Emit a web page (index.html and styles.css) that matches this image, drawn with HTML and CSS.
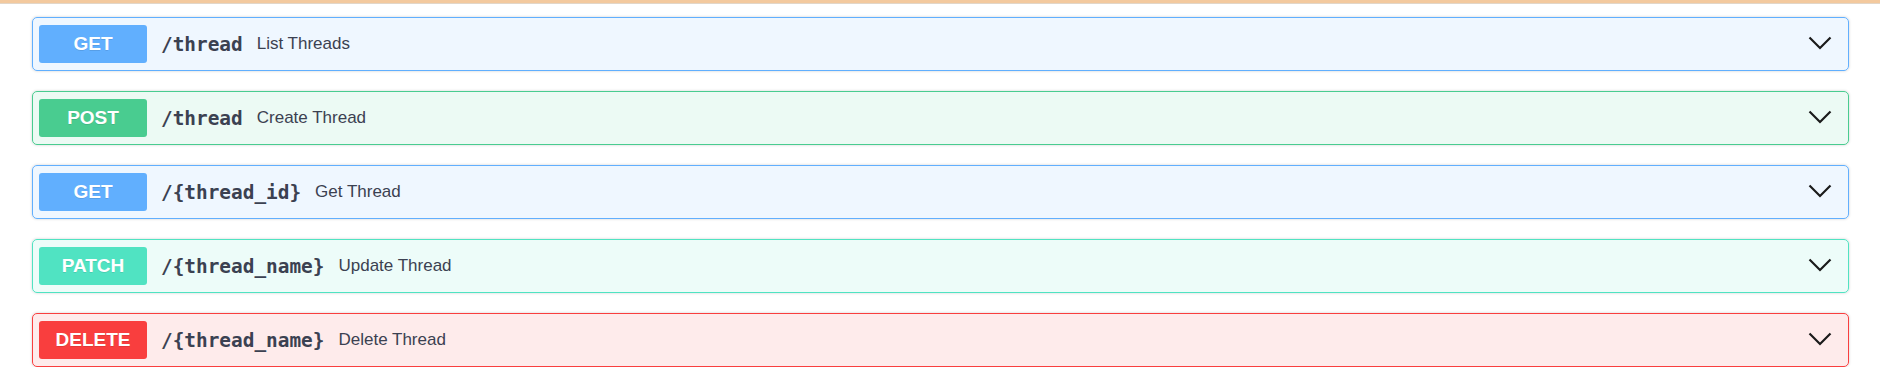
FILE: index.html
```html
<!DOCTYPE html>
<html lang="en">
<head>
    <meta charset="UTF-8">
    <title>Threads API</title>
    <link rel="stylesheet" href="styles.css">
</head>
<body>
    <div class="top-band"></div>
    <div class="operations">
        <div class="opblock opblock-get">
            <span class="method">GET</span>
            <span class="path">/thread</span>
            <span class="desc">List Threads</span>
            <svg class="arrow" width="24" height="14" viewBox="0 0 24 14"><polyline points="1.5,1.5 12,12 22.5,1.5"/></svg>
        </div>
        <div class="opblock opblock-post">
            <span class="method">POST</span>
            <span class="path">/thread</span>
            <span class="desc">Create Thread</span>
            <svg class="arrow" width="24" height="14" viewBox="0 0 24 14"><polyline points="1.5,1.5 12,12 22.5,1.5"/></svg>
        </div>
        <div class="opblock opblock-get">
            <span class="method">GET</span>
            <span class="path">/{thread_id}</span>
            <span class="desc">Get Thread</span>
            <svg class="arrow" width="24" height="14" viewBox="0 0 24 14"><polyline points="1.5,1.5 12,12 22.5,1.5"/></svg>
        </div>
        <div class="opblock opblock-patch">
            <span class="method">PATCH</span>
            <span class="path">/{thread_name}</span>
            <span class="desc">Update Thread</span>
            <svg class="arrow" width="24" height="14" viewBox="0 0 24 14"><polyline points="1.5,1.5 12,12 22.5,1.5"/></svg>
        </div>
        <div class="opblock opblock-delete">
            <span class="method">DELETE</span>
            <span class="path">/{thread_name}</span>
            <span class="desc">Delete Thread</span>
            <svg class="arrow" width="24" height="14" viewBox="0 0 24 14"><polyline points="1.5,1.5 12,12 22.5,1.5"/></svg>
        </div>
    </div>
</body>
</html>
```
FILE: styles.css
```css
body {
    margin: 0;
    background-color: #ffffff;
    font-family: "Liberation Sans", Arial, sans-serif;
    color: #3b4151;
}
.top-band {
    height: 3px;
    background-color: #f3c99e;
    border-bottom: 1px solid #e2d6c8;
}
.operations {
    display: flex;
    flex-direction: column;
    gap: 20px;
    padding: 13px 31px 0 32px;
}
.opblock {
    display: flex;
    align-items: center;
    padding: 7px 6px;
    border: 1px solid #61affe;
    border-radius: 5px;
    box-shadow: 0 0 3px rgba(0, 0, 0, 0.19);
}
.method {
    width: 108px;
    height: 38px;
    line-height: 38px;
    text-align: center;
    border-radius: 3px;
    color: #ffffff;
    font-size: 19px;
    font-weight: bold;
    text-shadow: 0 1px 0 rgba(0, 0, 0, 0.1);
    flex-shrink: 0;
}
.path {
    margin-left: 14px;
    font-family: "DejaVu Sans Mono", monospace;
    font-size: 19.4px;
    font-weight: bold;
    color: #3b4151;
}
.desc {
    margin-left: 14px;
    font-size: 17px;
    color: #3b4151;
    flex: 1;
}
.arrow {
    margin-right: 10px;
    margin-top: -3px;
}
.arrow polyline {
    fill: none;
    stroke: #1b1b1b;
    stroke-width: 2.2;
}
.opblock-get {
    background-color: rgba(97, 175, 254, 0.1);
    border-color: #61affe;
}
.opblock-get .method {
    background-color: #61affe;
}
.opblock-post {
    background-color: rgba(73, 204, 144, 0.1);
    border-color: #49cc90;
}
.opblock-post .method {
    background-color: #49cc90;
}
.opblock-patch {
    background-color: rgba(80, 227, 194, 0.1);
    border-color: #50e3c2;
}
.opblock-patch .method {
    background-color: #50e3c2;
}
.opblock-delete {
    background-color: rgba(249, 62, 62, 0.1);
    border-color: #f93e3e;
}
.opblock-delete .method {
    background-color: #f93e3e;
}
```
